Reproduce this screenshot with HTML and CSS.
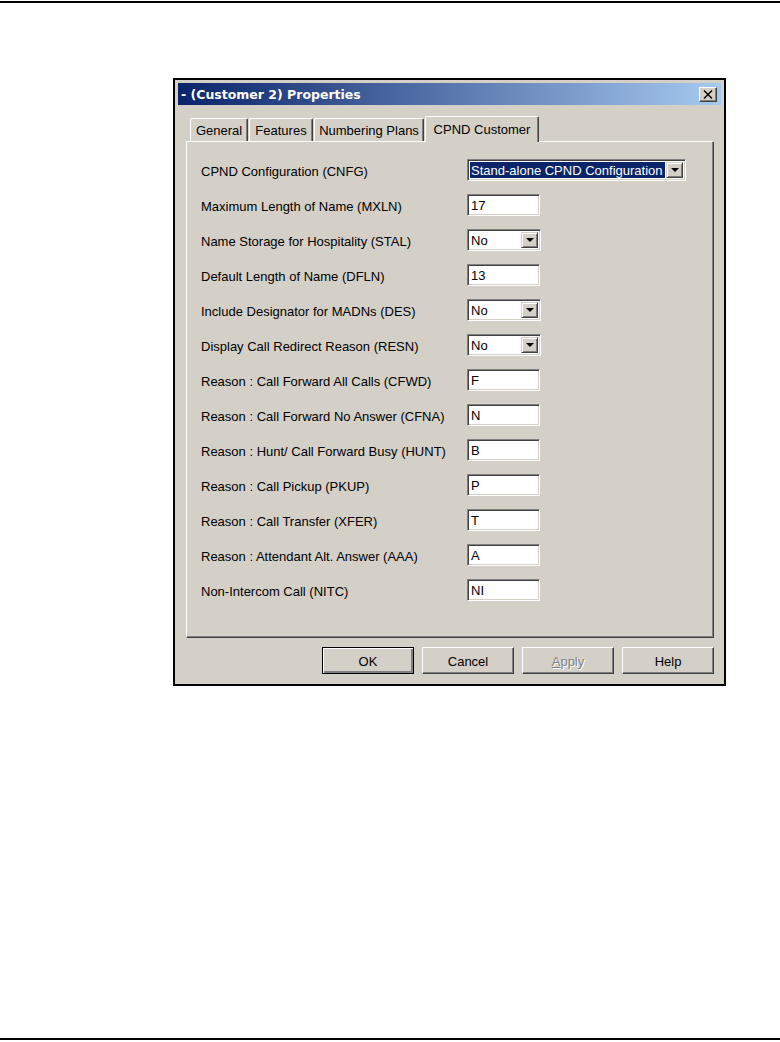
FILE: index.html
```html
<!DOCTYPE html>
<html lang="en">

<head>
    <meta charset="UTF-8">
    <title>(Customer 2) Properties</title>
    <link rel="stylesheet" href="styles.css">
</head>

<body>
    <div class="page">
        <div class="rule"></div>

        <div class="shot">
            <div class="window">
                <div class="titlebar">
                    <span class="title">- (Customer 2) Properties</span>
                    <span class="close">
                        <svg width="10" height="9" viewBox="0 0 10 9">
                            <path d="M1 0.5 L9 8.5 M9 0.5 L1 8.5" stroke="#000" stroke-width="1.4" fill="none" />
                        </svg>
                    </span>
                </div>

                <div class="tabs">
                    <div class="tab t-general">General</div>
                    <div class="tab t-features">Features</div>
                    <div class="tab t-plans">Numbering Plans</div>
                    <div class="tab t-cpnd active">CPND Customer</div>
                </div>

                <div class="panel">
                    <div class="row">
                        <span class="label">CPND Configuration (CNFG)</span>
                        <div class="select wide">
                            <span class="value"><span class="selected">Stand-alone CPND Configuration</span></span>
                            <span class="arrow"></span>
                        </div>
                    </div>
                    <div class="row">
                        <span class="label">Maximum Length of Name (MXLN)</span>
                        <div class="field">17</div>
                    </div>
                    <div class="row">
                        <span class="label">Name Storage for Hospitality (STAL)</span>
                        <div class="select">
                            <span class="value">No</span>
                            <span class="arrow"></span>
                        </div>
                    </div>
                    <div class="row">
                        <span class="label">Default Length of Name (DFLN)</span>
                        <div class="field">13</div>
                    </div>
                    <div class="row">
                        <span class="label">Include Designator for MADNs (DES)</span>
                        <div class="select">
                            <span class="value">No</span>
                            <span class="arrow"></span>
                        </div>
                    </div>
                    <div class="row">
                        <span class="label">Display Call Redirect Reason (RESN)</span>
                        <div class="select">
                            <span class="value">No</span>
                            <span class="arrow"></span>
                        </div>
                    </div>
                    <div class="row">
                        <span class="label">Reason : Call Forward All Calls (CFWD)</span>
                        <div class="field">F</div>
                    </div>
                    <div class="row">
                        <span class="label">Reason : Call Forward No Answer (CFNA)</span>
                        <div class="field">N</div>
                    </div>
                    <div class="row">
                        <span class="label">Reason : Hunt/ Call Forward Busy (HUNT)</span>
                        <div class="field">B</div>
                    </div>
                    <div class="row">
                        <span class="label">Reason : Call Pickup (PKUP)</span>
                        <div class="field">P</div>
                    </div>
                    <div class="row">
                        <span class="label">Reason : Call Transfer (XFER)</span>
                        <div class="field">T</div>
                    </div>
                    <div class="row">
                        <span class="label">Reason : Attendant Alt. Answer (AAA)</span>
                        <div class="field">A</div>
                    </div>
                    <div class="row">
                        <span class="label">Non-Intercom Call (NITC)</span>
                        <div class="field">NI</div>
                    </div>
                </div>

                <div class="buttons">
                    <div class="btn default">OK</div>
                    <div class="btn">Cancel</div>
                    <div class="btn disabled"><u>A</u>pply</div>
                    <div class="btn">Help</div>
                </div>
            </div>
        </div>

        <div class="fill"></div>
        <div class="rule bottom"></div>
    </div>
</body>

</html>
```

FILE: styles.css
```css
body,
div {
    margin: 0;
    padding: 0;
}

body {
    background: #fff;
    font: 13px/1 "Liberation Sans", Arial, sans-serif;
    color: #000;
}

.page {
    display: flex;
    flex-direction: column;
    height: 1042px;
}

.rule {
    height: 2px;
    margin-top: 1px;
    background: #000;
}

.rule.bottom {
    margin-top: 0;
    margin-bottom: 2px;
}

.fill {
    flex: 1;
}

/* screenshot frame */
.shot {
    box-sizing: border-box;
    width: 553px;
    height: 608px;
    margin: 75px 0 0 173px;
    border: 2px solid #000;
    background: #d4d0c8;
}

.window {
    display: flex;
    flex-direction: column;
    padding: 3px 3px 0 3px;
    background: #d4d0c8;
}

/* title bar */
.titlebar {
    display: flex;
    align-items: center;
    justify-content: space-between;
    height: 22px;
    padding: 0 4px 0 3px;
    background: linear-gradient(to right, #0a246a, #a6caf0);
}

.title {
    color: #fff;
    font: bold 12.5px "DejaVu Sans", Verdana, sans-serif;
}

.close {
    display: flex;
    align-items: center;
    justify-content: center;
    box-sizing: border-box;
    width: 18px;
    height: 15px;
    background: #d4d0c8;
    border: 1px solid;
    border-color: #fff #404040 #404040 #fff;
    box-shadow: inset -1px -1px #808080;
}

/* tabs */
.tabs {
    display: flex;
    align-items: flex-end;
    height: 25px;
    margin: 11px 0 0 12px;
    position: relative;
    z-index: 1;
}

.tab {
    box-sizing: border-box;
    height: 23px;
    padding-top: 5px;
    text-align: center;
    border-top: 1px solid #fff;
    border-left: 1px solid #fff;
    border-right: 1px solid #404040;
    box-shadow: inset -1px 0 #808080;
    border-radius: 2px 2px 0 0;
    background: #d4d0c8;
    margin-right: 1px;
}

.t-general {
    width: 58px;
}

.t-features {
    width: 64px;
}

.t-plans {
    width: 110px;
}

.t-cpnd {
    width: 114px;
}

.tab.active {
    height: 26px;
    padding-top: 6px;
    margin-bottom: -1px;
}

/* panel */
.panel {
    box-sizing: border-box;
    display: flex;
    flex-direction: column;
    gap: 13px;
    height: 497px;
    margin: 0 7px 0 8px;
    padding: 17px 0 0 14px;
    border: 1px solid;
    border-color: #fff #404040 #404040 #fff;
    box-shadow: inset -1px -1px #808080;
}

.row {
    display: flex;
    align-items: center;
    height: 22px;
}

.label {
    width: 266px;
    padding-top: 2px;
}

.field,
.select {
    box-sizing: border-box;
    height: 22px;
    background: #fff;
    border: 1px solid;
    border-color: #808080 #fff #fff #808080;
    box-shadow: inset 1px 1px #404040, inset -1px -1px #d4d0c8;
}

.field {
    width: 73px;
    padding: 4px 0 0 3px;
}

.select {
    display: flex;
    width: 74px;
    padding: 2px;
}

.select.wide {
    width: 219px;
}

.value {
    flex: 1;
    padding: 2px 0 0 1px;
    overflow: hidden;
    white-space: nowrap;
}

.selected {
    display: inline-block;
    height: 16px;
    margin: -2px 0 0 -1px;
    padding: 2px 1px 0 1px;
    box-sizing: border-box;
    background: #0a246a;
    color: #fff;
}

.wide .selected {
    width: 100%;
    height: 17px;
    padding-right: 0;
}

.arrow {
    box-sizing: border-box;
    width: 17px;
    height: 16px;
    border: 1px solid;
    border-color: #d4d0c8 #404040 #404040 #d4d0c8;
    box-shadow: inset 1px 1px #fff, inset -1px -1px #808080;
    background: #d4d0c8;
    position: relative;
}

.arrow::after {
    content: "";
    position: absolute;
    left: 4px;
    top: 5px;
    border-left: 4px solid transparent;
    border-right: 4px solid transparent;
    border-top: 4px solid #000;
}

/* dialog buttons */
.buttons {
    display: flex;
    justify-content: flex-end;
    gap: 8px;
    margin: 9px 7px 0 0;
}

.btn {
    box-sizing: border-box;
    width: 92px;
    height: 27px;
    padding-top: 7px;
    text-align: center;
    border: 1px solid;
    border-color: #fff #404040 #404040 #fff;
    box-shadow: inset -1px -1px #808080;
}

.btn.default {
    border: 1px solid #000;
    box-shadow: inset 1px 1px #fff, inset -2px -2px #808080;
}

.btn.disabled {
    color: #808080;
    text-shadow: 1px 1px #fff;
}

.btn.disabled u {
    text-decoration-thickness: 1px;
}
```
